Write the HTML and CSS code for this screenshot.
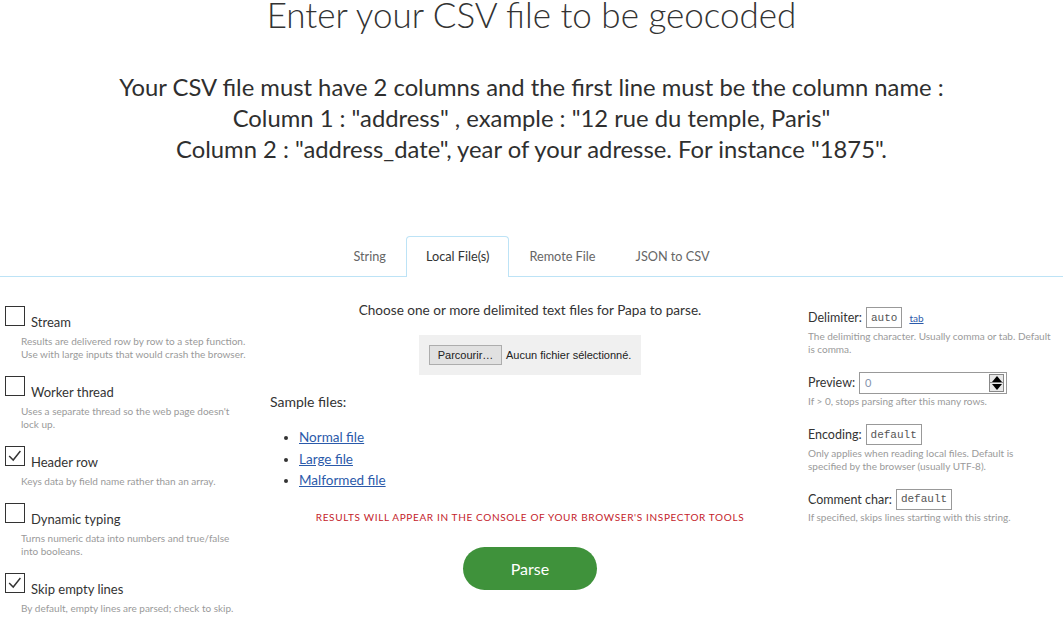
FILE: index.html
```html
<!DOCTYPE html>
<html lang="en">
<head>
<meta charset="utf-8">
<title>Geocode CSV</title>
<link rel="stylesheet" href="styles.css">
</head>
<body>
<h1 class="title">Enter your CSV file to be geocoded</h1>
<div class="intro">
  <p>Your CSV file must have 2 columns and the first line must be the column name :</p>
  <p>Column 1 : "address" , example : "12 rue du temple, Paris"</p>
  <p>Column 2 : "address_date", year of your adresse. For instance "1875".</p>
</div>
<nav class="tabs">
  <a class="tab" href="#">String</a>
  <a class="tab active" href="#">Local File(s)</a>
  <a class="tab" href="#">Remote File</a>
  <a class="tab" href="#">JSON to CSV</a>
</nav>
<main class="panel">
  <section class="options">
    <div class="opt">
      <label class="opt-row"><span class="cb"></span><span class="opt-label">Stream</span></label>
      <div class="desc">Results are delivered row by row to a step function.<br>Use with large inputs that would crash the browser.</div>
    </div>
    <div class="opt">
      <label class="opt-row"><span class="cb"></span><span class="opt-label">Worker thread</span></label>
      <div class="desc">Uses a separate thread so the web page doesn't<br>lock up.</div>
    </div>
    <div class="opt">
      <label class="opt-row"><span class="cb"><svg viewBox="0 0 20 20" width="18" height="18"><polyline points="3.5,10 8,14.5 16,4.5" fill="none" stroke="#333" stroke-width="1.6"/></svg></span><span class="opt-label">Header row</span></label>
      <div class="desc">Keys data by field name rather than an array.</div>
    </div>
    <div class="opt">
      <label class="opt-row"><span class="cb"></span><span class="opt-label">Dynamic typing</span></label>
      <div class="desc">Turns numeric data into numbers and true/false<br>into booleans.</div>
    </div>
    <div class="opt">
      <label class="opt-row"><span class="cb"><svg viewBox="0 0 20 20" width="18" height="18"><polyline points="3.5,10 8,14.5 16,4.5" fill="none" stroke="#333" stroke-width="1.6"/></svg></span><span class="opt-label">Skip empty lines</span></label>
      <div class="desc">By default, empty lines are parsed; check to skip.</div>
    </div>
  </section>

  <section class="center">
    <p class="choose">Choose one or more delimited text files for Papa to parse.</p>
    <div class="file"><span class="browse">Parcourir…</span><span class="nofile">Aucun fichier sélectionné.</span></div>
    <p class="samples">Sample files:</p>
    <ul class="sample-list">
      <li><a href="#">Normal file</a></li>
      <li><a href="#">Large file</a></li>
      <li><a href="#">Malformed file</a></li>
    </ul>
    <p class="notice">Results will appear in the console of your browser's inspector tools</p>
    <div class="actions"><button class="parse" type="button">Parse</button></div>
  </section>

  <section class="config">
    <div class="cfg">
      <div class="cfg-row"><span class="cfg-label">Delimiter:</span><span class="box mono">auto</span><a class="small-link" href="#">tab</a></div>
      <div class="desc">The delimiting character. Usually comma or tab. Default<br>is comma.</div>
    </div>
    <div class="cfg">
      <div class="cfg-row"><span class="cfg-label">Preview:</span><span class="box num"><span class="num-val">0</span><span class="spin"><span class="spin-up"></span><span class="spin-down"></span></span></span></div>
      <div class="desc">If &gt; 0, stops parsing after this many rows.</div>
    </div>
    <div class="cfg">
      <div class="cfg-row"><span class="cfg-label">Encoding:</span><span class="box mono">default</span></div>
      <div class="desc">Only applies when reading local files. Default is<br>specified by the browser (usually UTF-8).</div>
    </div>
    <div class="cfg">
      <div class="cfg-row"><span class="cfg-label">Comment char:</span><span class="box mono">default</span></div>
      <div class="desc">If specified, skips lines starting with this string.</div>
    </div>
  </section>
</main>
</body>
</html>
```
FILE: styles.css
```css
* { box-sizing: border-box; }
body {
  margin: 0;
  font-family: Lato, "Open Sans", sans-serif;
  color: #333;
  background: #fff;
}
p { margin: 0; }

.title {
  margin: 0;
  text-align: center;
  font-weight: 300;
  font-size: 35px;
  line-height: 29px;
  color: #333;
}

.intro {
  margin-top: 43px;
  text-align: center;
  font-size: 23.8px;
  line-height: 31px;
  color: #2f2f2f;
}

.tabs {
  margin-top: 71px;
  display: flex;
  justify-content: center;
  border-bottom: 1px solid #bde3f6;
}
.tab {
  display: block;
  padding: 12px 19px 13px;
  margin-bottom: -1px;
  font-size: 12.7px;
  line-height: 15px;
  color: #666;
  text-decoration: none;
  border: 1px solid transparent;
  border-bottom: none;
  border-radius: 4px 4px 0 0;
}
.tab.active {
  border-color: #bde3f6;
  background: #fff;
  color: #333;
}

.panel {
  display: grid;
  grid-template-columns: 260px 540px 1fr;
  padding-top: 25px;
}

/* left options */
.options { padding: 4px 0 0 5px; }
.opt { margin-bottom: 15px; }
.opt-row { display: flex; align-items: flex-end; }
.cb {
  width: 20px;
  height: 20px;
  border: 1px solid #333;
  background: #fff;
  display: flex;
  align-items: center;
  justify-content: center;
  flex: none;
}
.opt-label {
  margin-left: 6px;
  margin-bottom: -4px;
  font-size: 13px;
  line-height: 15px;
  color: #333;
}
.desc {
  font-size: 10px;
  line-height: 13px;
  color: #9a9a9a;
}
.options .desc { margin: 9px 0 0 16px; }

/* center */
.center { padding-left: 10px; }
.choose {
  text-align: center;
  font-size: 13.6px;
  line-height: 17px;
  margin-left: -10px;
}
.file {
  width: 222px;
  margin: 16px auto 0;
  transform: translateX(-5px);
  background: #f0f0f0;
  padding: 10px;
  display: flex;
  align-items: center;
  font-family: "Liberation Sans", Arial, sans-serif;
  font-size: 11px;
  color: #222;
}
.browse {
  width: 73px;
  height: 20px;
  line-height: 18px;
  text-align: center;
  border: 1px solid #adadad;
  background: #e1e1e1;
  flex: none;
}
.nofile { margin-left: 4px; white-space: nowrap; }
.samples {
  margin-top: 18px;
  font-size: 14px;
  line-height: 17px;
}
.sample-list {
  margin: 17px 0 0;
  padding-left: 29px;
  font-size: 13.5px;
  line-height: 21.5px;
}
.sample-list a { color: #2b5aaa; }
.notice {
  margin-top: 19px;
  margin-left: -10px;
  text-align: center;
  font-size: 10px;
  line-height: 13px;
  letter-spacing: 0.65px;
  text-transform: uppercase;
  color: #c4232b;
}
.actions {
  margin-top: 23px;
  margin-left: -10px;
  display: flex;
  justify-content: center;
}
.parse {
  width: 134px;
  height: 43px;
  border: none;
  border-radius: 22px;
  background: #3f923b;
  color: #fff;
  font-family: Lato, sans-serif;
  font-size: 16px;
}

/* right */
.config { padding: 5px 0 0 8px; }
.cfg { margin-bottom: 16px; }
.cfg-row { display: flex; align-items: center; }
.cfg-label { font-size: 12.5px; line-height: 15px; margin-right: 4px; }
.box {
  height: 21px;
  border: 1px solid #999;
  padding: 0 4px;
  display: flex;
  align-items: center;
  color: #555;
}
.mono { font-family: "Liberation Mono", monospace; font-size: 11px; }
.small-link { margin-left: 7px; font-size: 10px; color: #2b5aaa; }
.num { width: 148px; height: 22px; padding: 0 2px 0 5px; }
.num-val { flex: 1; font-size: 11px; color: #8493ad; }
.spin { display: flex; flex-direction: column; width: 15px; height: 18px; border: 1px solid #888; }
.spin-up, .spin-down { flex: 1; background: #e8e8e8; position: relative; }
.spin-up { border-bottom: 1px solid #888; }
.spin-up::after, .spin-down::after {
  content: "";
  position: absolute;
  left: 2px;
  border-left: 5px solid transparent;
  border-right: 5px solid transparent;
}
.spin-up::after { top: 1px; border-bottom: 6px solid #000; }
.spin-down::after { top: 1px; border-top: 6px solid #000; }
.config .desc { margin-top: 1.5px; }
```
